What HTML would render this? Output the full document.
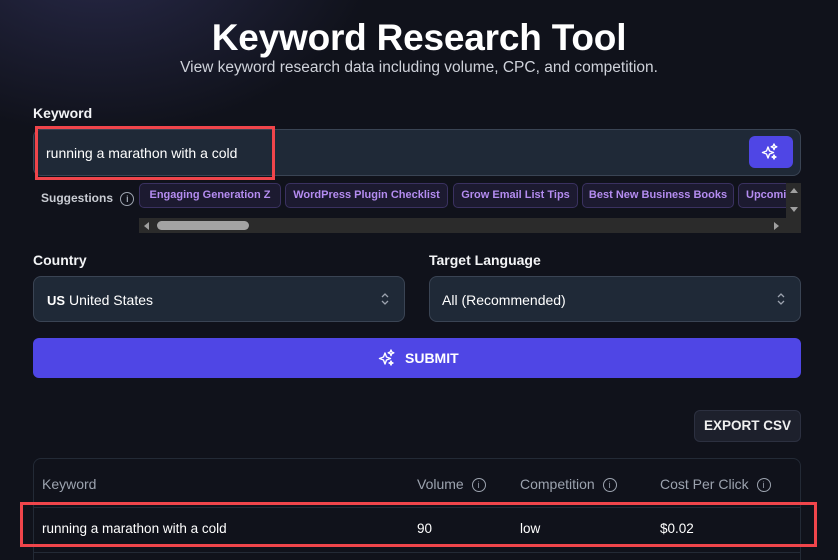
<!DOCTYPE html>
<html><head><meta charset="utf-8"><style>
*{box-sizing:border-box;margin:0;padding:0}
html,body{width:838px;height:560px;overflow:hidden}
body{background:#10121b;font-family:"Liberation Sans",sans-serif;color:#fff;position:relative}
.bg{position:absolute;left:-200px;top:-250px;width:600px;height:400px;background:radial-gradient(ellipse at center,rgba(70,70,130,.45),rgba(16,18,27,0) 65%)}
.a{position:absolute}
h1{position:absolute;left:0;width:838px;top:17px;text-align:center;font-size:37px;font-weight:700;letter-spacing:-.2px}
.sub{left:0;width:838px;top:59px;text-align:center;font-size:15.5px;color:#cfd2da}
.lbl{font-size:14px;font-weight:700;color:#f3f4f6}
.box{background:#1f2937;border:1px solid #3a4454;border-radius:8px}
.chip{position:absolute;top:0;height:25px;border:1px solid #3a3160;background:#1c1a30;border-radius:5px;color:#b48cf0;font-size:11px;font-weight:700;line-height:23px;text-align:center;white-space:nowrap;overflow:hidden}
.info{display:inline-block;width:14px;height:14px;border:1px solid #9ca3af;border-radius:50%;font-size:9px;line-height:12px;text-align:center;color:#9ca3af;vertical-align:middle;margin-left:4px}
.th{top:476px;font-size:14px;color:#9ca3af}
.td{top:521px;font-size:13.5px;color:#fff}
</style></head><body>
<div class="bg"></div>
<h1>Keyword Research Tool</h1>
<div class="a sub">View keyword research data including volume, CPC, and competition.</div>
<div class="a lbl" style="left:33px;top:105px">Keyword</div>
<div class="a box" style="left:33px;top:129px;width:768px;height:47px"></div>
<div class="a" style="left:46px;top:145px;font-size:14px">running a marathon with a cold</div>
<div class="a" style="left:35px;top:126px;width:240px;height:54px;border:3px solid #f0454b"></div>
<div class="a" style="left:749px;top:136px;width:44px;height:32px;background:#4f46e5;border-radius:6px">
<svg width="44" height="32" viewBox="0 0 44 32"><g fill="none" stroke="#fff" stroke-width="1.4" stroke-linejoin="round"><path d="M19 11l1.5 4 4 1.5-4 1.5-1.5 4-1.5-4-4-1.5 4-1.5z"/><path d="M25 8l.8 2 2 .8-2 .8-.8 2-.8-2-2-.8 2-.8z"/><path d="M25 19l.6 1.4 1.4.6-1.4.6-.6 1.4-.6-1.4-1.4-.6 1.4-.6z"/></g></svg></div>
<div class="a" style="left:41px;top:191px;font-size:12px;font-weight:700;color:#c9ccd3">Suggestions <span class="info">i</span></div>
<div class="a" style="left:139px;top:183px;width:662px;height:50px;overflow:hidden">
<div class="chip" style="left:0;width:142px">Engaging Generation Z</div>
<div class="chip" style="left:146px;width:163px">WordPress Plugin Checklist</div>
<div class="chip" style="left:314px;width:125px">Grow Email List Tips</div>
<div class="chip" style="left:443px;width:152px">Best New Business Books</div>
<div class="chip" style="left:599px;width:70px;text-align:left;padding-left:7px">Upcoming</div>
<div class="a" style="left:647px;top:0;width:15px;height:35px;background:#2b2b2b"></div>
<div class="a" style="left:651px;top:5px;width:0;height:0;border-left:4px solid transparent;border-right:4px solid transparent;border-bottom:5px solid #a0a0a0"></div>
<div class="a" style="left:651px;top:24px;width:0;height:0;border-left:4px solid transparent;border-right:4px solid transparent;border-top:5px solid #a0a0a0"></div>
<div class="a" style="left:0;top:35px;width:662px;height:15px;background:#2b2b2b"></div>
<div class="a" style="left:5px;top:39px;border-top:4px solid transparent;border-bottom:4px solid transparent;border-right:5px solid #a0a0a0"></div>
<div class="a" style="left:18px;top:38px;width:92px;height:9px;background:#a3a3a3;border-radius:5px"></div>
<div class="a" style="left:635px;top:39px;border-top:4px solid transparent;border-bottom:4px solid transparent;border-left:5px solid #a0a0a0"></div>
</div>
<div class="a lbl" style="left:33px;top:252px">Country</div>
<div class="a lbl" style="left:429px;top:252px">Target Language</div>
<div class="a box" style="left:33px;top:276px;width:372px;height:46px"></div>
<div class="a box" style="left:429px;top:276px;width:372px;height:46px"></div>
<div class="a" style="left:47px;top:292px;font-size:14px"><b style="font-size:13px">US</b> United States</div>
<div class="a" style="left:442px;top:292px;font-size:14px">All (Recommended)</div>
<svg class="a" style="left:379px;top:291px" width="12" height="16"><path d="M3 6l3-3 3 3M3 10l3 3 3-3" fill="none" stroke="#9ca3af" stroke-width="1.3"/></svg>
<svg class="a" style="left:775px;top:291px" width="12" height="16"><path d="M3 6l3-3 3 3M3 10l3 3 3-3" fill="none" stroke="#9ca3af" stroke-width="1.3"/></svg>
<div class="a" style="left:33px;top:338px;width:768px;height:40px;background:#4f46e5;border-radius:6px"></div>
<svg class="a" style="left:376px;top:347px" width="22" height="22" viewBox="0 0 22 22"><g fill="none" stroke="#fff" stroke-width="1.4" stroke-linejoin="round"><path d="M9 6l1.5 4 4 1.5-4 1.5-1.5 4-1.5-4-4-1.5 4-1.5z"/><path d="M15 3l.8 2 2 .8-2 .8-.8 2-.8-2-2-.8 2-.8z"/><path d="M15 14l.6 1.4 1.4.6-1.4.6-.6 1.4-.6-1.4-1.4-.6 1.4-.6z"/></g></svg>
<div class="a" style="left:405px;top:350px;font-size:14px;font-weight:700">SUBMIT</div>
<div class="a" style="left:694px;top:410px;width:107px;height:32px;background:#1d202c;border:1px solid #2c3040;border-radius:6px;font-size:13.5px;font-weight:700;text-align:center;line-height:30px;color:#f0f0f0">EXPORT CSV</div>
<div class="a" style="left:33px;top:458px;width:768px;height:110px;border:1px solid #232a36;border-radius:8px"></div>
<div class="a" style="left:34px;top:507px;width:766px;height:1px;background:#232a36"></div>
<div class="a" style="left:34px;top:552px;width:766px;height:1px;background:#232a36"></div>
<div class="a th" style="left:42px">Keyword</div>
<div class="a th" style="left:417px">Volume <span class="info">i</span></div>
<div class="a th" style="left:520px">Competition <span class="info">i</span></div>
<div class="a th" style="left:660px">Cost Per Click <span class="info">i</span></div>
<div class="a td" style="left:42px">running a marathon with a cold</div>
<div class="a td" style="left:417px">90</div>
<div class="a td" style="left:520px">low</div>
<div class="a td" style="left:660px">$0.02</div>
<div class="a" style="left:20px;top:502px;width:797px;height:45px;border:3px solid #f0454b"></div>
</body></html>
